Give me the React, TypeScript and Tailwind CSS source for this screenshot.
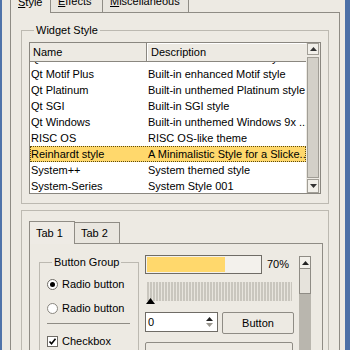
import React from "react";

const Tri = ({ dir = "up", color = "#000" }: { dir?: "up" | "down"; color?: string }) => (
  <svg width="7" height="4" viewBox="0 0 7 4">
    {dir === "up" ? <polygon points="0,4 3.5,0 7,4" fill={color} /> : <polygon points="0,0 3.5,4 7,0" fill={color} />}
  </svg>
);

const rows: [string, string][] = [
  ["Qt Motif", "Built-in unthemed Motif style"],
  ["Qt Motif Plus", "Built-in enhanced Motif style"],
  ["Qt Platinum", "Built-in unthemed Platinum style"],
  ["Qt SGI", "Built-in SGI style"],
  ["Qt Windows", "Built-in unthemed Windows 9x ..."],
  ["RISC OS", "RISC OS-like theme"],
  ["Reinhardt style", "A Minimalistic Style for a Slicke..."],
  ["System++", "System themed style"],
  ["System-Series", "System Style 001"],
  ["Web style", "Web widget style"],
];

export default function App() {
  return (
    <div className="w-[350px] h-[350px] overflow-hidden flex bg-[#4c70a7] font-['Liberation_Sans',Arial,sans-serif] text-[11px] leading-[13px] text-black">
      <div className="w-[2px] shrink-0 bg-[#5074aa]" />
      <div className="w-[343px] shrink-0 bg-[#edeae3] pl-[8px] pr-[5px] flex flex-col">
        <div className="-mt-[11px] flex flex-col w-[330px]">
          {/* top tabs */}
          <div className="flex items-end h-[23px]">
            <div className="relative z-10 w-[41px] h-[23px] -mb-px border border-b-0 border-[#8f8c85] bg-[#edeae3] flex items-center pl-[7px]">
              <span><span className="underline">S</span>tyle</span>
            </div>
            <div className="w-[52px] h-[22px] border border-l-0 border-b-0 border-[#8f8c85] bg-[#e9e6df] flex items-center pl-[7px] pb-[1px]">
              <span><span className="underline">E</span>ffects</span>
            </div>
            <div className="w-[86px] h-[22px] border border-l-0 border-b-0 border-[#8f8c85] bg-[#e9e6df] flex items-center pl-[7px] pb-[1px]">
              <span><span className="underline">M</span>iscellaneous</span>
            </div>
          </div>
          {/* tab panel */}
          <div className="h-[360px] border border-[#8f8c85] pl-[10px] pr-[9px] pt-[11px] flex flex-col">
            <fieldset className="w-[308px] border border-[#bcb9b1] pl-[7px] pr-[7px] pb-[9px]">
              <legend className="ml-[5px] px-[2px] leading-[13px]">Widget Style</legend>
              <div className="mt-[5px] h-[152px] border border-[#8a8780] bg-white flex">
                <div className="w-[276px] flex flex-col">
                  <div className="h-[19px] shrink-0 flex bg-[#edeae3] border-b border-[#8a8780]">
                    <div className="w-[117px] border-r border-[#8a8780] pl-[3px] flex items-center">Name</div>
                    <div className="flex-1 pl-[3px] flex items-center border-t border-l border-white">Description</div>
                  </div>
                  <div className="flex-1 overflow-hidden">
                    <div className="-mt-[12px] flex flex-col">
                      {rows.map(([n, d]) => {
                        const sel = n === "Reinhardt style";
                        return (
                          <div
                            key={n}
                            className={
                              sel
                                ? "h-[16px] flex items-center bg-[#ffd86c] outline outline-1 outline-dotted outline-[#5a4a10] -outline-offset-1"
                                : "h-[16px] flex items-center"
                            }
                          >
                            <div className="w-[117px] pl-[1px] whitespace-nowrap overflow-hidden">{n}</div>
                            <div className="flex-1 pl-[1px] whitespace-nowrap overflow-hidden">{d}</div>
                          </div>
                        );
                      })}
                    </div>
                  </div>
                </div>
                <div className="w-[14px] flex flex-col bg-[#edeae3] px-[1px] py-[0px]">
                  <div className="h-[12px] border border-[#a19e96] bg-[#f2f0ea] flex items-center justify-center">
                    <Tri dir="up" color="#333" />
                  </div>
                  <div className="flex-1 mt-[2px] mb-[1px] border border-[#a19e96] bg-[#d3d0c8]" />
                  <div className="h-[14px] border border-[#a19e96] bg-[#f2f0ea] flex items-center justify-center">
                    <Tri dir="down" color="#333" />
                  </div>
                </div>
              </div>
            </fieldset>

            {/* lower preview frame */}
            <div className="mt-[6px] w-[308px] h-[200px] border border-[#bcb9b1] pl-[7px] pt-[10px] flex flex-col">
              <div className="flex items-end h-[23px]">
                <div className="relative z-10 w-[46px] h-[23px] -mb-px border border-b-0 border-[#8f8c85] bg-[#eeebe5] flex items-center pl-[6px]">
                  Tab 1
                </div>
                <div className="w-[45px] h-[21px] border border-l-0 border-b-0 border-[#8f8c85] bg-[#e9e6df] flex items-center pl-[6px]">
                  Tab 2
                </div>
              </div>
              <div className="w-[294px] h-[200px] border border-[#8f8c85] pl-[9px] flex">
                {/* Button group */}
                <fieldset className="mt-[12px] w-[100px] h-[140px] border border-[#bcb9b1] pl-[7px] pr-[8px]">
                  <legend className="ml-[5px] px-[2px] leading-[13px]">Button Group</legend>
                  <div className="mt-[3px] h-[24px] flex items-center gap-[4px]">
                    <div className="w-[11px] h-[11px] rounded-full border border-[#6f6c66] bg-white flex items-center justify-center">
                      <div className="w-[5px] h-[5px] rounded-full bg-black" />
                    </div>
                    <span className="whitespace-nowrap">Radio button</span>
                  </div>
                  <div className="h-[24px] flex items-center gap-[4px]">
                    <div className="w-[11px] h-[11px] rounded-full border border-[#8a8780] bg-white" />
                    <span className="whitespace-nowrap">Radio button</span>
                  </div>
                  <div className="mt-[3px] h-px bg-[#8f8c85]" />
                  <div className="mt-[9px] h-[16px] flex items-center gap-[4px]">
                    <div className="w-[11px] h-[11px] border border-[#6f6c66] bg-white flex items-center justify-center">
                      <svg width="9" height="9" viewBox="0 0 9 9">
                        <path d="M1.5 4.5 L3.5 6.8 L7.5 1.8" fill="none" stroke="#000" strokeWidth="1.6" />
                      </svg>
                    </div>
                    <span>Checkbox</span>
                  </div>
                </fieldset>
                {/* right column */}
                <div className="ml-[6px] w-[149px] pt-[11px] flex flex-col">
                  <div className="flex items-center">
                    <div className="w-[117px] h-[19px] border border-[#6f6c66] bg-[#f3f1ec] p-[1px]">
                      <div className="w-[78px] h-full bg-[#ffd86c]" />
                    </div>
                    <span className="ml-[5px]">70%</span>
                  </div>
                  <div className="mt-[8px] ml-[2px] w-[145px] h-[19px] bg-[repeating-linear-gradient(90deg,#c9c6be_0px,#c9c6be_2px,#e8e5de_2px,#e8e5de_3px)]" />
                  <div className="-mt-[3px] h-[6px] flex">
                    <svg width="10" height="6" viewBox="0 0 10 6" className="ml-[1px]">
                      <polygon points="0,6 4.5,0 9,6" fill="#000" />
                    </svg>
                  </div>
                  <div className="mt-[8px] flex items-start">
                    <div className="w-[73px] h-[20px] border border-[#6f6c66] bg-white flex items-center pl-[2px]">
                      <span className="flex-1">0</span>
                      <div className="flex flex-col gap-[2px] pr-[4px]">
                        <Tri dir="up" color="#222" />
                        <Tri dir="down" color="#9a978f" />
                      </div>
                    </div>
                    <div className="ml-[4px] w-[72px] h-[22px] border border-[#8f8c85] rounded-[2px] bg-[#edeae3] flex items-center justify-center">
                      Button
                    </div>
                  </div>
                  <div className="mt-[8px] w-[148px] h-[22px] border border-[#8f8c85] rounded-[2px] bg-[#edeae3] pl-[4px] pt-[7px]">
                    Combobox
                  </div>
                </div>
                {/* scrollbar */}
                <div className="ml-[5px] mt-[12px] w-[12px] flex flex-col">
                  <div className="h-[13px] border border-[#8f8c85] bg-[#f2f0ea] flex items-center justify-center">
                    <Tri dir="up" color="#222" />
                  </div>
                  <div className="h-[25px] border border-t-0 border-[#8f8c85] bg-[#e6e3dc]" />
                  <div className="flex-1 bg-[#b9b6ae]" />
                </div>
              </div>
            </div>
          </div>
        </div>
      </div>
    </div>
  );
}
